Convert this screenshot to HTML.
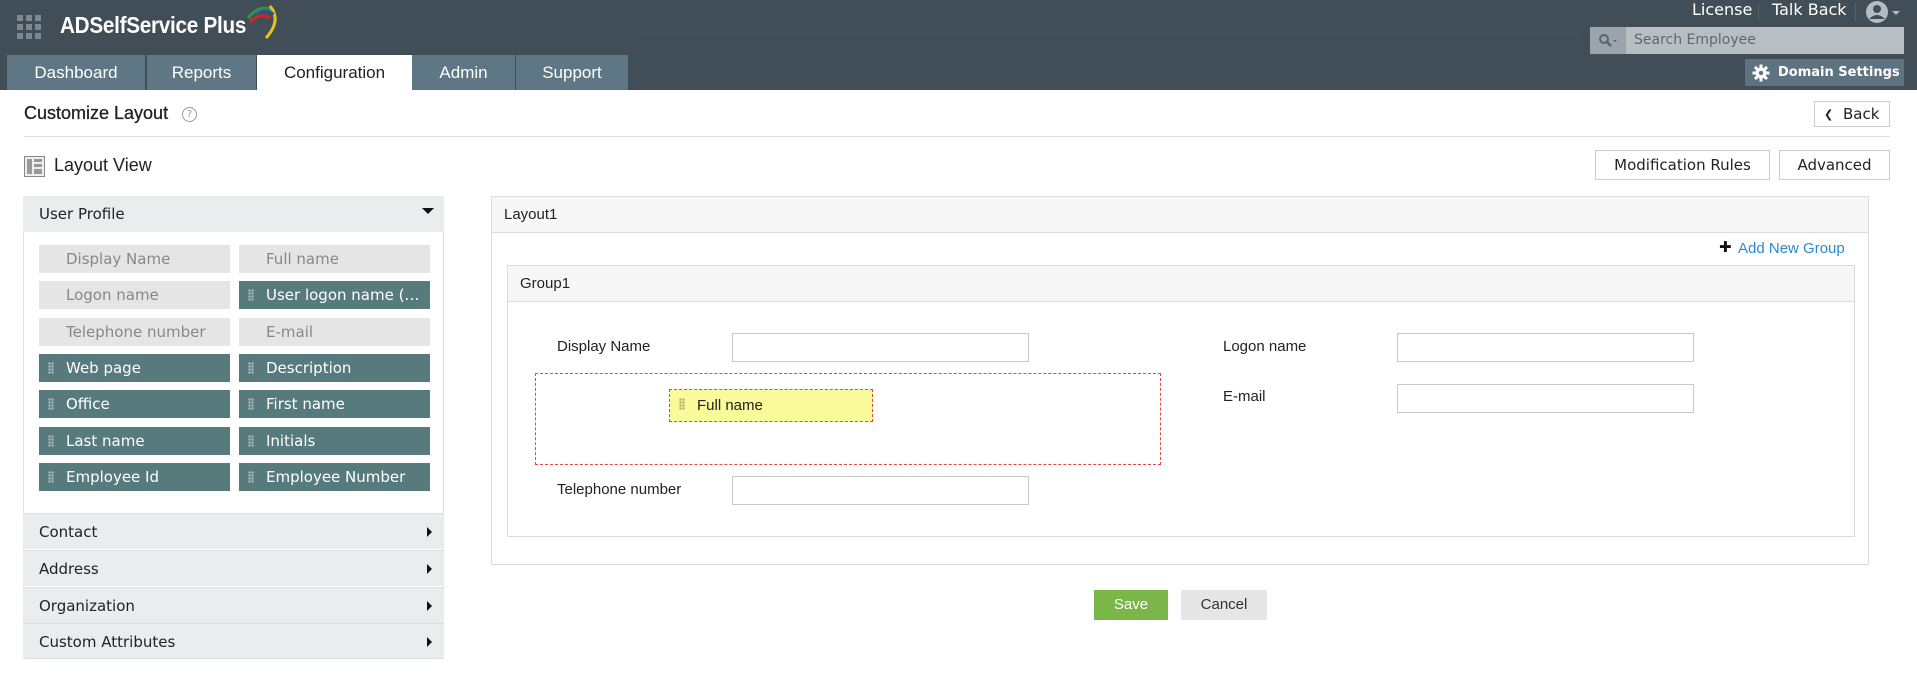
<!DOCTYPE html>
<html><head><meta charset="utf-8"><style>
*{margin:0;padding:0;box-sizing:border-box}
body{width:1917px;height:687px;position:relative;background:#fff;font-family:"DejaVu Sans","Liberation Sans",sans-serif;overflow:hidden;color:#222}
.a{position:absolute}
.hdr{left:0;top:0;width:1917px;height:90px;background:#414d57}
.tab{top:55px;height:35px;background:#5f7785;color:#fff;font-family:"Liberation Sans",sans-serif;font-size:17px;line-height:35px;text-align:center}
.chip{height:28px;width:191px;font-size:15px;line-height:28px;padding-left:27px;white-space:nowrap;overflow:hidden}
.g{background:#e5e5e5;color:#888}
.d{background:#577b7d;color:#fff}
.d::before{content:"";position:absolute;left:9px;top:8px;width:6px;height:12px;background:radial-gradient(circle,#9db0b1 1.2px,transparent 1.4px) 0 0/3px 3px}
.acc{left:23px;width:421px;height:36px;background:#eaeded;border-top:1px solid #dcdfe0;font-size:15px;line-height:36px;padding-left:16px}
.acc::after{content:"";position:absolute;right:12px;top:13px;border-left:5px solid #111;border-top:5px solid transparent;border-bottom:5px solid transparent}
.inp{height:29px;width:297px;border:1px solid #c8c8c8;background:#fff}
.lbl{font-size:15px;font-family:"Liberation Sans",sans-serif}
.btn{border:1px solid #ccc;background:#fff;font-size:15px;text-align:center}
</style></head><body>
<div class="a hdr"></div>
<svg class="a" style="left:17px;top:15px" width="25" height="25"><g fill="#7d8890"><rect x="0" y="0" width="6" height="6"/><rect x="9" y="0" width="6" height="6"/><rect x="18" y="0" width="6" height="6"/><rect x="0" y="9" width="6" height="6"/><rect x="9" y="9" width="6" height="6"/><rect x="18" y="9" width="6" height="6"/><rect x="0" y="18" width="6" height="6"/><rect x="9" y="18" width="6" height="6"/><rect x="0" y="18" width="6" height="6"/><rect x="9" y="18" width="6" height="6"/><rect x="18" y="18" width="6" height="6"/></g></svg>
<div class="a" style="left:60px;top:12px;color:#fff;font-size:23px;font-family:'Liberation Sans',sans-serif;letter-spacing:-0.3px;font-weight:bold;transform:scaleX(0.9);transform-origin:left">ADSelfService Plus</div>
<svg class="a" style="left:246px;top:2px" width="36" height="40"><path d="M2 16 Q14 2 26 8" stroke="#2a9a3e" stroke-width="3" fill="none"/><path d="M4 20 Q14 10 24 16" stroke="#d22" stroke-width="3" fill="none"/><path d="M24 4 Q36 18 20 36" stroke="#e8c21a" stroke-width="3" fill="none"/><path d="M10 12 Q20 4 28 12" stroke="#2a5bb5" stroke-width="2" fill="none"/></svg>
<div class="a" style="left:640px;top:33px;width:940px;height:1px;background:#4b5761"></div>
<div class="a" style="left:1692px;top:0;color:#fff;font-size:16px;line-height:20px">License</div>
<div class="a" style="left:1758px;top:3px;width:1px;height:18px;background:#56626b"></div>
<div class="a" style="left:1772px;top:0;color:#fff;font-size:16px;line-height:20px">Talk Back</div>
<div class="a" style="left:1855px;top:3px;width:1px;height:18px;background:#56626b"></div>
<svg class="a" style="left:1865px;top:1px" width="40" height="24"><circle cx="12" cy="11" r="11" fill="#b4bcc1"/><circle cx="12" cy="8" r="4" fill="#414d57"/><path d="M4 18 Q12 10 20 18 Z" fill="#414d57"/><path d="M27 10 L35 10 L31 14 Z" fill="#b4bcc1"/></svg>
<div class="a" style="left:1590px;top:27px;width:36px;height:27px;background:#9ba4aa"></div>
<svg class="a" style="left:1598px;top:33px" width="22" height="16"><circle cx="6" cy="6" r="4" stroke="#58636b" stroke-width="2" fill="none"/><path d="M9 9 L13 13" stroke="#58636b" stroke-width="2.5"/><path d="M15 7 L19 7 L17 9Z" fill="#58636b"/></svg>
<div class="a" style="left:1626px;top:27px;width:278px;height:27px;background:#b8bfc3;color:#666;font-size:14px;line-height:27px;padding-left:8px">Search Employee</div>
<div class="a" style="left:1745px;top:59px;width:159px;height:27px;background:#5e7380;color:#fff;font-size:13px;line-height:27px;padding-left:33px;font-weight:bold">Domain Settings</div>
<svg class="a" style="left:1752px;top:64px" width="18" height="18" viewBox="0 0 18 18"><g fill="#fff"><circle cx="9" cy="9" r="5.5"/><rect x="7.5" y="0.5" width="3" height="17"/><rect x="0.5" y="7.5" width="17" height="3"/><rect x="7.5" y="0.5" width="3" height="17" transform="rotate(45 9 9)"/><rect x="7.5" y="0.5" width="3" height="17" transform="rotate(-45 9 9)"/></g><circle cx="9" cy="9" r="2.2" fill="#5e7380"/></svg>
<div class="a tab" style="left:7px;width:138px">Dashboard</div>
<div class="a tab" style="left:147px;width:109px">Reports</div>
<div class="a tab" style="left:257px;width:155px;background:#fff;color:#222">Configuration</div>
<div class="a tab" style="left:412px;width:103px">Admin</div>
<div class="a tab" style="left:516px;width:112px">Support</div>

<div class="a" style="left:24px;top:103px;font-size:18px;font-family:'Liberation Sans',sans-serif;-webkit-text-stroke:0.3px #222">Customize Layout</div>
<div class="a" style="left:182px;top:107px;width:15px;height:15px;border:1px solid #999;border-radius:50%;font-size:10px;line-height:13px;text-align:center;color:#999">?</div>
<div class="a" style="left:24px;top:136px;width:1866px;height:1px;background:#ddd"></div>
<div class="a" style="left:1814px;top:101px;width:76px;height:26px;border:1px solid #ccc;font-size:15px;line-height:24px;padding-left:28px">Back</div>
<div class="a" style="left:1824px;top:108px;font-size:11px;font-weight:bold">&#10094;</div>
<svg class="a" style="left:24px;top:156px" width="21" height="21"><rect x="0.5" y="0.5" width="20" height="20" fill="#eee" stroke="#888"/><rect x="3" y="3" width="5" height="15" fill="#999"/><rect x="10" y="3" width="8" height="3" fill="#999"/><rect x="10" y="8" width="8" height="3" fill="#999"/><rect x="10" y="13" width="8" height="5" fill="#999"/></svg>
<div class="a" style="left:54px;top:155px;font-size:18px;font-family:'Liberation Sans',sans-serif">Layout View</div>
<div class="a btn" style="left:1595px;top:150px;width:175px;height:30px;line-height:28px">Modification Rules</div>
<div class="a btn" style="left:1779px;top:150px;width:111px;height:30px;line-height:28px">Advanced</div>

<div class="a" style="left:23px;top:196px;width:421px;height:463px;border:1px solid #e0e3e4"></div>
<div class="a" style="left:23px;top:196px;width:421px;height:36px;background:#eaeded;font-size:15px;line-height:36px;padding-left:16px">User Profile</div>
<div class="a" style="left:422px;top:208px;border-top:6px solid #111;border-left:6px solid transparent;border-right:6px solid transparent"></div>
<div class="a chip g" style="left:39px;top:245px">Display Name</div>
<div class="a chip g" style="left:239px;top:245px">Full name</div>
<div class="a chip g" style="left:39px;top:281px">Logon name</div>
<div class="a chip d" style="left:239px;top:281px">User logon name (…</div>
<div class="a chip g" style="left:39px;top:318px">Telephone number</div>
<div class="a chip g" style="left:239px;top:318px">E-mail</div>
<div class="a chip d" style="left:39px;top:354px">Web page</div>
<div class="a chip d" style="left:239px;top:354px">Description</div>
<div class="a chip d" style="left:39px;top:390px">Office</div>
<div class="a chip d" style="left:239px;top:390px">First name</div>
<div class="a chip d" style="left:39px;top:427px">Last name</div>
<div class="a chip d" style="left:239px;top:427px">Initials</div>
<div class="a chip d" style="left:39px;top:463px">Employee Id</div>
<div class="a chip d" style="left:239px;top:463px">Employee Number</div>
<div class="a acc" style="top:513px">Contact</div>
<div class="a acc" style="top:550px">Address</div>
<div class="a acc" style="top:587px">Organization</div>
<div class="a acc" style="top:623px;border-bottom:1px solid #dcdfe0">Custom Attributes</div>

<div class="a" style="left:491px;top:196px;width:1378px;height:369px;border:1px solid #dcdcdc"></div>
<div class="a" style="left:492px;top:197px;width:1376px;height:36px;background:#f7f7f7;border-bottom:1px solid #dcdcdc;font-size:15px;line-height:36px;padding-left:12px;font-family:'Liberation Sans',sans-serif">Layout1</div>
<div class="a" style="left:1719px;top:238px;font-size:15px;font-weight:bold;color:#111">✚</div>
<div class="a" style="left:1738px;top:240px;font-size:15px;color:#2a8ad0;font-family:'Liberation Sans',sans-serif">Add New Group</div>
<div class="a" style="left:507px;top:265px;width:1348px;height:272px;border:1px solid #dcdcdc"></div>
<div class="a" style="left:508px;top:266px;width:1346px;height:36px;background:#f7f7f7;border-bottom:1px solid #dcdcdc;font-size:15px;line-height:36px;padding-left:12px;font-family:'Liberation Sans',sans-serif">Group1</div>
<div class="a lbl" style="left:557px;top:338px">Display Name</div>
<div class="a inp" style="left:732px;top:333px"></div>
<div class="a" style="left:535px;top:373px;width:626px;height:92px;border:1px dashed #e04848"></div>
<div class="a" style="left:669px;top:389px;width:204px;height:33px;border:1px dashed #e04848;background:#fafa9a;font-size:15px;line-height:31px;padding-left:27px;font-family:'Liberation Sans',sans-serif">Full name</div>
<div class="a" style="left:679px;top:398px;width:6px;height:12px;background:radial-gradient(circle,#b8b87a 1.2px,transparent 1.4px) 0 0/3px 3px"></div>
<div class="a lbl" style="left:557px;top:481px">Telephone number</div>
<div class="a inp" style="left:732px;top:476px"></div>
<div class="a lbl" style="left:1223px;top:338px">Logon name</div>
<div class="a inp" style="left:1397px;top:333px"></div>
<div class="a lbl" style="left:1223px;top:388px">E-mail</div>
<div class="a inp" style="left:1397px;top:384px"></div>
<div class="a" style="left:1094px;top:590px;width:74px;height:30px;background:#7ab648;color:#fff;font-size:15px;line-height:30px;text-align:center;font-family:'Liberation Sans',sans-serif">Save</div>
<div class="a" style="left:1181px;top:590px;width:86px;height:30px;background:#e6e6e6;color:#333;font-size:15px;line-height:30px;text-align:center;font-family:'Liberation Sans',sans-serif">Cancel</div>
</body></html>
